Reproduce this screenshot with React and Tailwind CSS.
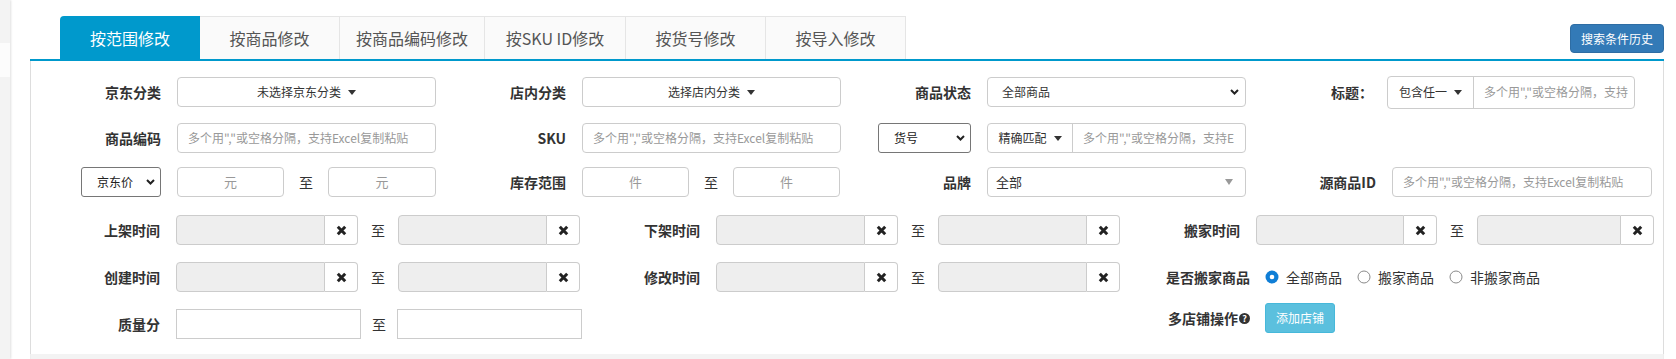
import React from "react";

// small drawings
const Caret = ({ color = "border-t-[#333]" }) => (
  <span className={`ml-[7px] inline-block h-0 w-0 border-x-[4px] border-t-[5px] border-x-transparent ${color}`} />
);

const Chevron = () => (
  <svg width="9" height="6" viewBox="0 0 9 6" className="shrink-0">
    <path d="M1 1l3.5 3.5L8 1" fill="none" stroke="#222" strokeWidth="2" />
  </svg>
);

const XIcon = () => (
  <svg width="11" height="11" viewBox="0 0 11 11">
    <path d="M1.8 1.8l7.4 7.4M9.2 1.8l-7.4 7.4" stroke="#222" strokeWidth="3" />
  </svg>
);

const tabs = [
  ["按范围修改", "w-[140px]"],
  ["按商品修改", "w-[140px]"],
  ["按商品编码修改", "w-[145px]"],
  ["按SKU ID修改", "w-[141px]"],
  ["按货号修改", "w-[140px]"],
  ["按导入修改", "w-[140px]"],
];

const HINT = '多个用","或空格分隔，支持Excel复制粘贴';

//! form pieces
const Label = ({ children, w = "w-[146px]" }) => (
  <div className={`${w} shrink-0 pr-4 text-right text-[14px] font-bold leading-[20px] text-[#333]`}>{children}</div>
);

const Col = ({ children, w = "w-[405px]" }) => (
  <div className={`${w} flex shrink-0 items-center`}>{children}</div>
);

const Box = ({ children, w, cls = "" }) => (
  <div className={`${w} ${cls} flex h-[30px] shrink-0 items-center rounded-[4px] border border-[#ccc] bg-white text-[12px]`}>
    {children}
  </div>
);

const Hint = ({ w = "w-[259px]", text = HINT }) => (
  <Box w={w} cls="overflow-hidden whitespace-nowrap pl-[10px] text-[#999]">{text}</Box>
);

const NativeSelect = ({ w, text }) => (
  <div className={`${w} flex h-[30px] shrink-0 items-center justify-between rounded-[3px] border border-[#767676] bg-white pl-[15px] pr-[5px] text-[12px] text-[#222]`}>
    <span>{text}</span>
    <Chevron />
  </div>
);

const DateGroup = ({ w = "w-[149px]" }) => (
  <div className="flex h-[30px] shrink-0">
    <div className={`${w} rounded-l-[4px] border border-[#ccc] bg-[#eee]`} />
    <div className="flex w-[33px] items-center justify-center rounded-r-[4px] border border-l-0 border-[#ccc] bg-white">
      <XIcon />
    </div>
  </div>
);

const To = ({ m = "mx-[13px]" }) => <span className={`${m} shrink-0 text-[14px] leading-[20px] text-[#333]`}>至</span>;

const Radio = ({ checked, text }) => (
  <div className="mr-[15px] flex items-center">
    {checked ? (
      <svg width="14" height="14" viewBox="0 0 14 14">
        <circle cx="7" cy="7" r="6.5" fill="#0f7ed6" />
        <circle cx="7" cy="7" r="2.3" fill="#fff" />
      </svg>
    ) : (
      <svg width="14" height="14" viewBox="0 0 14 14">
        <circle cx="7" cy="7" r="6" fill="#fff" stroke="#8a8a8a" strokeWidth="1" />
      </svg>
    )}
    <span className="ml-[7px] text-[14px] leading-[20px] text-[#333]">{text}</span>
  </div>
);

const DateRange = ({ label, a = "w-[149px]", b = "w-[149px]" }) => (
  <Col w="w-[540px]">
    <Label w="w-[145px]">{label}</Label>
    <DateGroup w={a} />
    <To />
    <DateGroup w={b} />
  </Col>
);

export default function App() {
  return (
    <div className="flex h-[359px] w-[1676px] overflow-hidden bg-white font-['Noto_Sans_CJK_SC','Noto_Sans',sans-serif] text-[#333]">
      {/* side strip */}
      <div className="w-[10px] shrink-0 bg-[#f3f3f3] pt-[43px] shadow-[1px_0_2px_rgba(0,0,0,0.12)]">
        <div className="h-[34px] bg-[#fcfcfc]" />
      </div>

      <div className="w-[1654px] shrink-0 pl-[20px]">
        {/* tabs */}
        <div className="flex items-end justify-between pt-[16px]">
          <div className="ml-[30px] flex">
            {tabs.map(([t, w], i) => (
              <div
                key={t}
                className={`${w} flex h-[43px] items-center justify-center text-[16px] ${
                  i === 0
                    ? "rounded-tl-[4px] bg-[#0099cc] text-white"
                    : "border-r border-t border-[#e5e5e5] bg-[#fafafa] text-[#555]"
                }`}
              >
                {t}
              </div>
            ))}
          </div>
          <button className="mb-[6px] h-[29px] w-[94px] rounded-[4px] border border-[#2e6da4] bg-[#337ab7] text-[12px] text-white">
            搜索条件历史
          </button>
        </div>
        <div className="h-[2px] bg-[#0099cc]" />

        {/* form */}
        <div className="border-x border-[#ddd] pb-[15px] pt-[16px]">
          {/* row 1 */}
          <div className="flex h-[30px] items-center">
            <Col>
              <Label>京东分类</Label>
              <Box w="w-[259px]" cls="justify-center text-[#333]">
                未选择京东分类
                <Caret />
              </Box>
            </Col>
            <Col>
              <Label>店内分类</Label>
              <Box w="w-[259px]" cls="justify-center text-[#333]">
                选择店内分类
                <Caret />
              </Box>
            </Col>
            <Col>
              <Label>商品状态</Label>
              <Box w="w-[259px]" cls="justify-between pl-[14px] pr-[6px] text-[#333]">
                <span>全部商品</span>
                <Chevron />
              </Box>
            </Col>
            <Col>
              <Label w="w-[141px]">
                <span className="-mr-[2px]">标题：</span>
              </Label>
              <div className="flex h-[33px] w-[248px] shrink-0 rounded-[4px] border border-[#ccc] text-[12px]">
                <div className="flex w-[86px] items-center justify-center border-r border-[#ccc] text-[#333]">
                  包含任一
                  <Caret />
                </div>
                <div className="flex flex-1 items-center whitespace-nowrap pl-[10px] text-[#999]">多个用","或空格分隔，支持</div>
              </div>
            </Col>
          </div>

          {/* row 2 */}
          <div className="mt-[16px] flex h-[30px] items-center">
            <Col>
              <Label>商品编码</Label>
              <Hint />
            </Col>
            <Col>
              <Label>SKU</Label>
              <Hint />
            </Col>
            <Col>
              <div className="flex w-[146px] shrink-0 justify-end pr-4">
                <NativeSelect w="w-[93px]" text="货号" />
              </div>
              <div className="flex h-[30px] w-[259px] shrink-0 rounded-[4px] border border-[#ccc] text-[12px]">
                <div className="flex w-[85px] items-center justify-center border-r border-[#ccc] text-[#333]">
                  精确匹配
                  <Caret />
                </div>
                <div className="flex flex-1 items-center whitespace-nowrap pl-[10px] text-[#999]">多个用","或空格分隔，支持E</div>
              </div>
            </Col>
          </div>

          {/* row 3 */}
          <div className="mt-[14px] flex h-[30px] items-center">
            <Col>
              <div className="flex w-[146px] shrink-0 justify-end pr-4">
                <NativeSelect w="w-[80px]" text="京东价" />
              </div>
              <Box w="w-[107px]" cls="justify-center text-[13px] text-[#999]">元</Box>
              <To m="mx-[15px]" />
              <Box w="w-[108px]" cls="justify-center text-[13px] text-[#999]">元</Box>
            </Col>
            <Col>
              <Label>库存范围</Label>
              <Box w="w-[107px]" cls="justify-center text-[13px] text-[#999]">件</Box>
              <To m="mx-[15px]" />
              <Box w="w-[107px]" cls="justify-center text-[13px] text-[#999]">件</Box>
            </Col>
            <Col>
              <Label>品牌</Label>
              <Box w="w-[259px]" cls="justify-between pl-[8px] pr-[12px] text-[13px] text-[#333]">
                <span>全部</span>
                <span className="inline-block h-0 w-0 border-x-[4px] border-t-[6px] border-x-transparent border-t-[#999]" />
              </Box>
            </Col>
            <Col>
              <Label>源商品ID</Label>
              <Hint w="w-[260px]" />
            </Col>
          </div>

          {/* row 4 */}
          <div className="mt-[18px] flex h-[30px] items-center">
            <DateRange label="上架时间" />
            <DateRange label="下架时间" />
            <DateRange label="搬家时间" a="w-[148px]" b="w-[144px]" />
          </div>

          {/* row 5 */}
          <div className="mt-[17px] flex h-[30px] items-center">
            <DateRange label="创建时间" />
            <DateRange label="修改时间" />
            <Col w="w-[540px]">
              <Label w="w-[154px]">
                <span className="-mr-[1px]">是否搬家商品</span>
              </Label>
              <Radio checked text="全部商品" />
              <Radio text="搬家商品" />
              <Radio text="非搬家商品" />
            </Col>
          </div>

          {/* row 6 */}
          <div className="mt-[17px] flex h-[30px] items-center">
            <Col w="w-[540px]">
              <Label w="w-[145px]">质量分</Label>
              <div className="h-[30px] w-[185px] shrink-0 border border-[#ccc] bg-white" />
              <To m="mx-[11px]" />
              <div className="h-[30px] w-[185px] shrink-0 border border-[#ccc] bg-white" />
            </Col>
            <Col w="w-[540px]" />
            <div className="mb-[12px] flex w-[540px] shrink-0 items-center">
              <div className="flex w-[154px] shrink-0 items-center justify-end pr-[15px] text-[14px] font-bold leading-[20px] text-[#333]">
                多店铺操作
                <span className="ml-[1px] flex h-[11px] w-[11px] items-center justify-center rounded-full bg-[#333] text-[9px] font-bold leading-none text-white">
                  ?
                </span>
              </div>
              <button className="h-[30px] w-[70px] rounded-[3px] border border-[#46b8da] bg-[#5bc0de] text-[12px] text-white">
                添加店铺
              </button>
            </div>
          </div>
        </div>
        <div className="h-[10px] border-x border-[#eee] bg-[#f3f3f3]" />
      </div>
    </div>
  );
}
